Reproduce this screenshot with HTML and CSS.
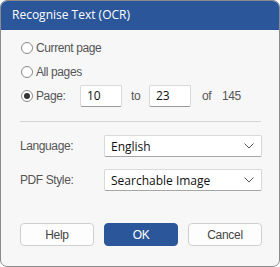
FILE: index.html
```html
<!DOCTYPE html>
<html lang="en">
<head>
    <meta charset="UTF-8">
    <meta name="viewport" content="width=device-width, initial-scale=1.0">
    <title>Recognise Text (OCR)</title>
    <link rel="stylesheet" href="styles.css">
</head>
<body>
    <div class="dialog">
        <div class="titlebar">Recognise Text (OCR)</div>

        <div class="content">
            <!-- Page range -->
            <div class="radio-row">
                <span class="radio"></span>
                <span class="label">Current page</span>
            </div>
            <div class="radio-row">
                <span class="radio"></span>
                <span class="label">All pages</span>
            </div>
            <div class="radio-row">
                <span class="radio checked"></span>
                <span class="label page-label">Page:</span>
                <div class="num-box">10</div>
                <span class="label to-label">to</span>
                <div class="num-box">23</div>
                <span class="label of-label">of</span>
                <span class="label">145</span>
            </div>

            <div class="divider"></div>

            <!-- Options -->
            <div class="field-row">
                <span class="label field-label">Language:</span>
                <div class="select">
                    <span>English</span>
                    <svg class="chevron" width="10" height="6" viewBox="0 0 10 6">
                        <path d="M0.5 0.5 L5 5 L9.5 0.5" fill="none" stroke="#555" stroke-width="1"/>
                    </svg>
                </div>
            </div>
            <div class="field-row">
                <span class="label field-label">PDF Style:</span>
                <div class="select">
                    <span>Searchable Image</span>
                    <svg class="chevron" width="10" height="6" viewBox="0 0 10 6">
                        <path d="M0.5 0.5 L5 5 L9.5 0.5" fill="none" stroke="#555" stroke-width="1"/>
                    </svg>
                </div>
            </div>

            <div class="buttons">
                <button class="btn">Help</button>
                <button class="btn primary">OK</button>
                <button class="btn">Cancel</button>
            </div>
        </div>
    </div>
</body>
</html>
```

FILE: styles.css
```css
/* General reset */
* {
    margin: 0;
    padding: 0;
    box-sizing: border-box;
}

body {
    font-family: 'Liberation Sans', Arial, sans-serif;
    font-size: 12px;
    letter-spacing: -0.4px;
    background-color: #ffffff;
    color: #333333;
}

.dialog {
    width: 280px;
    height: 267px;
    border: 1px solid #8c8c8c;
    border-radius: 7px;
    overflow: hidden;
    background-color: #f7f7f7;
}

.titlebar {
    height: 29px;
    line-height: 28px;
    padding-left: 11px;
    background-color: #2b579a;
    color: #ffffff;
    font-family: 'Open Sans', 'Noto Sans', sans-serif;
    font-size: 12px;
    letter-spacing: 0;
}

.content {
    padding: 6px 17px 0 19px;
}

.radio-row {
    display: flex;
    align-items: center;
    height: 24px;
}

.radio {
    width: 12px;
    height: 12px;
    border: 1px solid #8a8a8a;
    border-radius: 50%;
    background-color: #ffffff;
    margin-left: 1px;
    margin-right: 3px;
    position: relative;
}

.radio.checked::after {
    content: '';
    position: absolute;
    left: 2px;
    top: 2px;
    width: 6px;
    height: 6px;
    border-radius: 50%;
    background-color: #333333;
}

.label {
    color: #555555;
}

.page-label {
    width: 44px;
}

.num-box {
    width: 42px;
    height: 22px;
    line-height: 20px;
    padding-left: 6px;
    background-color: #ffffff;
    border: 1px solid #d9d9d9;
    border-bottom-color: #9a9a9a;
    border-radius: 2px;
    color: #111111;
    font-family: 'Open Sans', 'Noto Sans', sans-serif;
    font-size: 12px;
    letter-spacing: 0;
}

.to-label {
    width: 27px;
    padding-left: 9px;
}

.of-label {
    width: 31px;
    padding-left: 11px;
}

.divider {
    height: 1px;
    background-color: #d4d4d4;
    margin: 13px 1px 13px 0;
}

.field-row {
    display: flex;
    align-items: center;
    height: 22px;
    margin-bottom: 12px;
}

.field-label {
    width: 84px;
}

.select {
    flex: 1;
    height: 22px;
    display: flex;
    align-items: center;
    justify-content: space-between;
    padding: 0 7px 0 6px;
    background-color: #ffffff;
    border: 1px solid #d9d9d9;
    border-bottom-color: #a6a6a6;
    border-radius: 2px;
    color: #111111;
    font-family: 'Open Sans', 'Noto Sans', sans-serif;
    font-size: 12px;
    letter-spacing: 0;
}

.buttons {
    display: flex;
    gap: 10px;
    margin-top: 32px;
}

.btn {
    width: 74px;
    height: 23px;
    border: 1px solid #d0d0d0;
    border-radius: 4px;
    background-color: #fdfdfd;
    color: #444444;
    font-family: 'Liberation Sans', Arial, sans-serif;
    font-size: 12px;
    font-weight: normal;
    letter-spacing: -0.3px;
}

.btn.primary {
    background-color: #2b579a;
    border-color: #2b579a;
    color: #ffffff;
}
```
